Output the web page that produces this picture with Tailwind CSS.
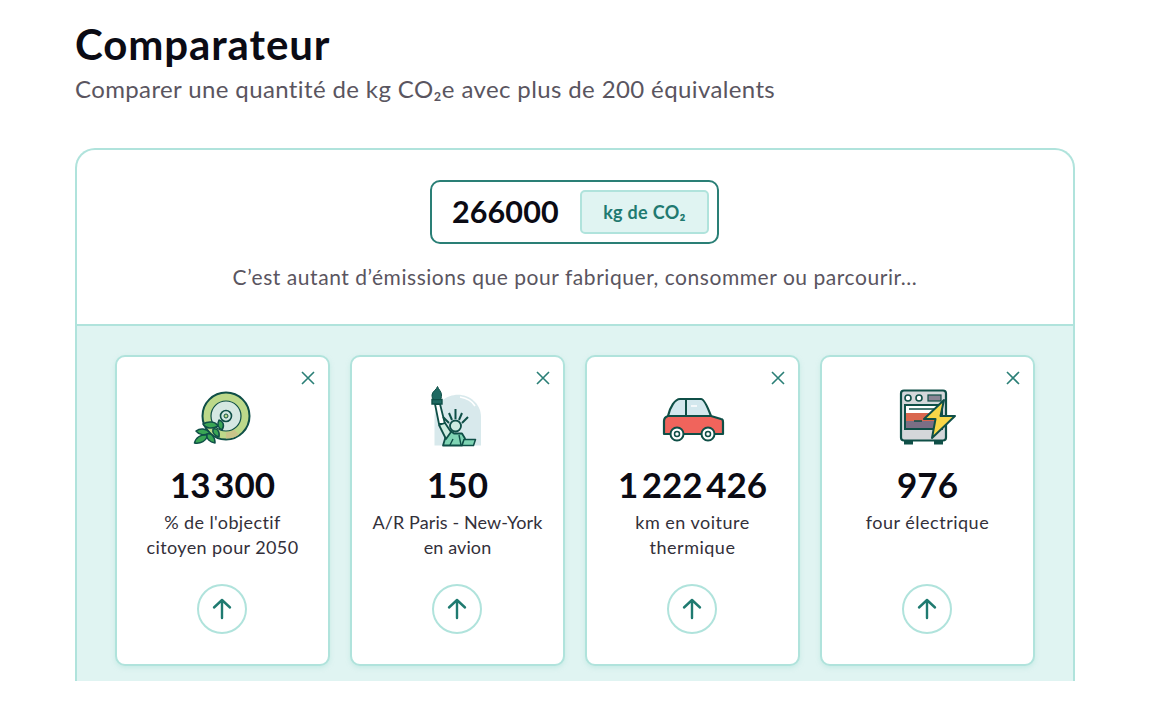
<!DOCTYPE html>
<html lang="fr">
<head>
    <meta charset="UTF-8">
    <meta name="viewport" content="width=device-width, initial-scale=1.0">
    <title>Comparateur</title>
    <script src="https://cdn.jsdelivr.net/npm/@tailwindcss/browser@4"></script>
</head>
<body class="bg-white font-['Lato','Noto_Sans',sans-serif] overflow-hidden">
<div class="w-[1150px] h-[728px] pl-[75px] pt-[20px]">
    <h1 class="font-bold text-[42px] leading-[48px] tracking-[0.9px] text-[#0b0b14]">Comparateur</h1>
    <p class="mt-[5px] text-[24px] leading-[32px] tracking-[0.38px] text-[#5a5560]">Comparer une quantité de kg CO₂e avec plus de 200 équivalents</p>

    <div class="mt-[43px] w-[1000px] h-[533px] overflow-hidden rounded-t-[20px] border-x-2 border-t-2 border-[#b0e3dc]">
        <div class="h-[176px] flex flex-col items-center pt-[30px] border-b-2 border-[#b0e3dc]">
            <div class="w-[289px] h-[64px] mr-[1px] flex items-center justify-between pl-[20px] pr-[8px] rounded-[10px] border-2 border-[#2a7f76]">
                <span class="font-bold text-[30.5px] tracking-[0.1px] text-[#0b0b14]">266000</span>
                <span class="w-[129px] h-[44px] flex items-center justify-center rounded-[5px] border-2 border-[#b0e3dc] bg-[#e0f4f2] font-bold text-[18px] tracking-[0.3px] text-[#1f7a70]">kg de CO₂</span>
            </div>
            <p class="mt-[18px] text-[21px] leading-[30px] tracking-[0.55px] text-[#5a5560]">C’est autant d’émissions que pour fabriquer, consommer ou parcourir...</p>
        </div>

        <div class="h-[360px] bg-[#e0f4f2] pt-[29px] pl-[38px] flex gap-[20px]">

            <div class="relative w-[215px] h-[311px] flex flex-col items-center pt-[32px] rounded-[10px] border-2 border-[#b0e3dc] bg-white shadow-[0_2px_4px_rgba(176,227,220,0.5)]">
                <svg class="absolute top-[13px] right-[12px] w-[16px] h-[16px]" viewBox="0 0 16 16" fill="none" stroke="#2a7f76" stroke-width="1.6"><path d="M2 2l12 12M14 2L2 14"/></svg>
                <svg class="w-[60px] h-[60px] overflow-visible" viewBox="0 0 60 60">
                    <circle cx="33" cy="27" r="23.500" fill="#bcd98a" stroke="#0f4f47" stroke-width="2"/>
                    <path d="M33 49.500c5 0 9-1 13-4l-5-5c-3 2-5 3-8 3z" fill="#c9c48a"/>
                    <circle cx="33" cy="27" r="15" fill="#d5e8e2" stroke="#0f4f47" stroke-width="1.200"/>
                    <circle cx="33" cy="27" r="5.500" fill="#d5e8e2" stroke="#0f4f47" stroke-width="1.600"/>
                    <circle cx="33" cy="27" r="2" fill="#bcd98a" stroke="#0f4f47" stroke-width="1"/>
                    <g fill="#3aa655" stroke="#0f4f47" stroke-width="1.500" stroke-linejoin="round">
                        <path d="M1.500 54c1-5 6-9 13-8-1 6-7 9-13 8z"/>
                        <path d="M3 42c4-3 10-3 14 2-5 3-11 2-14-2z"/>
                        <path d="M14 45c4-1 8 2 8 9-5-1-9-4-8-9z"/>
                        <path d="M10 35c5-3 12-3 15 2-5 3-12 3-15-2z"/>
                        <path d="M20 40c4-1 7 2 6 8-4-1-7-4-6-8z"/>
                        <path d="M26 31c4 1 6 5 3 10-4-2-5-6-3-10z"/>
                    </g>
                </svg>
                <div class="mt-[13px] font-bold text-[35px] leading-[44px] [word-spacing:-5px] text-[#0b0b14]">13 300</div>
                <div class="mt-[4px] text-[18px] leading-[25px] tracking-[0.4px] text-center text-[#33303a]">% de l'objectif<br>citoyen pour 2050</div>
                <div class="absolute top-[227px] left-[80px] w-[50px] h-[50px] flex items-center justify-center rounded-full border-2 border-[#b0e3dc]">
                    <svg class="w-[20px] h-[22px]" viewBox="0 0 20 22" fill="none" stroke="#1f7a70" stroke-width="2.4" stroke-linecap="round" stroke-linejoin="round"><path d="M10 20V2M2 9.500L10 2l8 7.500"/></svg>
                </div>
            </div>

            <div class="relative w-[215px] h-[311px] flex flex-col items-center pt-[32px] rounded-[10px] border-2 border-[#b0e3dc] bg-white shadow-[0_2px_4px_rgba(176,227,220,0.5)]">
                <svg class="absolute top-[13px] right-[12px] w-[16px] h-[16px]" viewBox="0 0 16 16" fill="none" stroke="#2a7f76" stroke-width="1.6"><path d="M2 2l12 12M14 2L2 14"/></svg>
                <svg class="w-[60px] h-[60px] overflow-visible" viewBox="0 0 60 60">
                    <path d="M6.500 56.500V28C6.500 14 19 5.700 30 5.700S53 14 53 28v28.500z" fill="#d8e9ec"/>
                    <path d="M32 8c6 1 12 4 15 9" fill="none" stroke="#fff" stroke-width="1.500"/>
                    <path d="M7 15h5l5 20h-6z" fill="#fff" stroke="#0f4f47" stroke-width="1.800" stroke-linejoin="round"/>
                    <path d="M15 56.500l3-10 4-5 4 3h8l3 5-3 7z" fill="#7fd4b4" stroke="#0f4f47" stroke-width="1.800" stroke-linejoin="round"/>
                    <path d="M11 36l6-2 6 9-5 7z" fill="#cdebe0" stroke="#0f4f47" stroke-width="1.800" stroke-linejoin="round"/>
                    <path d="M34 56.500l2-6h11.500l-2 6z" fill="#7fd4b4" stroke="#0f4f47" stroke-width="1.500" stroke-linejoin="round"/>
                    <path d="M25 50l-3 6M31 46l2 10" stroke="#0f4f47" stroke-width="1.400" fill="none"/>
                    <path d="M4 10.500h10v4.500H4z" fill="#1f6a62" stroke="#0f4f47" stroke-width="1.400"/>
                    <path d="M9.500-2.500c1 3 4 5 4 8.500 0 2-.5 4.500-1.500 4.500H6c-1.500 0-2-2.500-2-4.500C4 2.500 8.500 1 9.500-2.500z" fill="#1f6a62" stroke="#0f4f47" stroke-width="1"/>
                    <path d="M27.500 30V20M21 34l-6-6M34 34l6-6M24 31l-3-7M31 31l3-7" stroke="#0f4f47" stroke-width="2" fill="none"/>
                    <circle cx="27.500" cy="37" r="5.500" fill="#cdebe0" stroke="#0f4f47" stroke-width="1.800"/>
                </svg>
                <div class="mt-[13px] font-bold text-[35px] leading-[44px] [word-spacing:-5px] text-[#0b0b14]">150</div>
                <div class="mt-[4px] text-[18px] leading-[25px] tracking-[0.1px] text-center text-[#33303a]">A/R Paris - New-York<br>en avion</div>
                <div class="absolute top-[227px] left-[80px] w-[50px] h-[50px] flex items-center justify-center rounded-full border-2 border-[#b0e3dc]">
                    <svg class="w-[20px] h-[22px]" viewBox="0 0 20 22" fill="none" stroke="#1f7a70" stroke-width="2.4" stroke-linecap="round" stroke-linejoin="round"><path d="M10 20V2M2 9.500L10 2l8 7.500"/></svg>
                </div>
            </div>

            <div class="relative w-[215px] h-[311px] flex flex-col items-center pt-[32px] rounded-[10px] border-2 border-[#b0e3dc] bg-white shadow-[0_2px_4px_rgba(176,227,220,0.5)]">
                <svg class="absolute top-[13px] right-[12px] w-[16px] h-[16px]" viewBox="0 0 16 16" fill="none" stroke="#2a7f76" stroke-width="1.6"><path d="M2 2l12 12M14 2L2 14"/></svg>
                <svg class="w-[60px] h-[60px] overflow-visible" viewBox="0 0 60 60">
                    <path d="M1 45V32c0-2 1-4 4-5h43l10 3c1 0 2 1 2 3v12z" fill="#f0645c"/>
                    <path d="M6 27c2-9 7-17 12-17h20c3 0 7 9 10 17z" fill="#d3e8ee"/>
                    <path d="M1 45V32c0-2 1-4 4-5 2-9 7-17 12-17h21c3 0 7 9 10 17l10 3c1 0 2 1 2 3v12z" fill="none" stroke="#0f4f47" stroke-width="2.200" stroke-linejoin="round"/>
                    <path d="M5 27h43M23 10v17" stroke="#0f4f47" stroke-width="2" fill="none"/>
                    <path d="M28 17h6" stroke="#fff" stroke-width="1.500"/>
                    <circle cx="14" cy="45" r="6.500" fill="#fff" stroke="#0f4f47" stroke-width="2"/>
                    <circle cx="14" cy="45" r="2.500" fill="none" stroke="#0f4f47" stroke-width="1.500"/>
                    <circle cx="45" cy="45" r="6.500" fill="#fff" stroke="#0f4f47" stroke-width="2"/>
                    <circle cx="45" cy="45" r="2.500" fill="none" stroke="#0f4f47" stroke-width="1.500"/>
                </svg>
                <div class="mt-[13px] font-bold text-[35px] leading-[44px] [word-spacing:-5px] text-[#0b0b14]">1 222 426</div>
                <div class="mt-[4px] text-[18px] leading-[25px] tracking-[0.5px] text-center text-[#33303a]">km en voiture<br>thermique</div>
                <div class="absolute top-[227px] left-[80px] w-[50px] h-[50px] flex items-center justify-center rounded-full border-2 border-[#b0e3dc]">
                    <svg class="w-[20px] h-[22px]" viewBox="0 0 20 22" fill="none" stroke="#1f7a70" stroke-width="2.4" stroke-linecap="round" stroke-linejoin="round"><path d="M10 20V2M2 9.500L10 2l8 7.500"/></svg>
                </div>
            </div>

            <div class="relative w-[215px] h-[311px] flex flex-col items-center pt-[32px] rounded-[10px] border-2 border-[#b0e3dc] bg-white shadow-[0_2px_4px_rgba(176,227,220,0.5)]">
                <svg class="absolute top-[13px] right-[12px] w-[16px] h-[16px]" viewBox="0 0 16 16" fill="none" stroke="#2a7f76" stroke-width="1.6"><path d="M2 2l12 12M14 2L2 14"/></svg>
                <svg class="w-[60px] h-[60px] overflow-visible" viewBox="0 0 60 60">
                    <rect x="3" y="1.500" width="45" height="50" rx="3" fill="#d4d7da" stroke="#0f4f47" stroke-width="2.200"/>
                    <path d="M6 51.500h9v4H6zM36 51.500h9v4h-9z" fill="#0f4f47"/>
                    <circle cx="10" cy="9" r="3" fill="#fff" stroke="#0f4f47" stroke-width="1.600"/>
                    <circle cx="21" cy="9" r="3" fill="#fff" stroke="#0f4f47" stroke-width="1.600"/>
                    <rect x="30" y="6" width="13" height="6" fill="#8a8494" stroke="#0f4f47" stroke-width="1.200"/>
                    <rect x="7" y="16" width="37" height="24" fill="#fff" stroke="#0f4f47" stroke-width="2"/>
                    <path d="M8 24h35v8H8z" fill="#d9674f"/>
                    <path d="M8 32h35v7H8z" fill="#7b6e85"/>
                    <path d="M11 20h28M16 32h8" stroke="#0f4f47" stroke-width="1.400"/>
                    <path d="M46 11L26 30h11.500L34 49l23-22H42.500z" fill="#f8d748" stroke="#0f4f47" stroke-width="2" stroke-linejoin="round"/>
                </svg>
                <div class="mt-[13px] font-bold text-[35px] leading-[44px] [word-spacing:-5px] text-[#0b0b14]">976</div>
                <div class="mt-[4px] text-[18px] leading-[25px] tracking-[0.5px] text-center text-[#33303a]">four électrique</div>
                <div class="absolute top-[227px] left-[80px] w-[50px] h-[50px] flex items-center justify-center rounded-full border-2 border-[#b0e3dc]">
                    <svg class="w-[20px] h-[22px]" viewBox="0 0 20 22" fill="none" stroke="#1f7a70" stroke-width="2.4" stroke-linecap="round" stroke-linejoin="round"><path d="M10 20V2M2 9.500L10 2l8 7.500"/></svg>
                </div>
            </div>

        </div>
    </div>
</div>
</body>
</html>
